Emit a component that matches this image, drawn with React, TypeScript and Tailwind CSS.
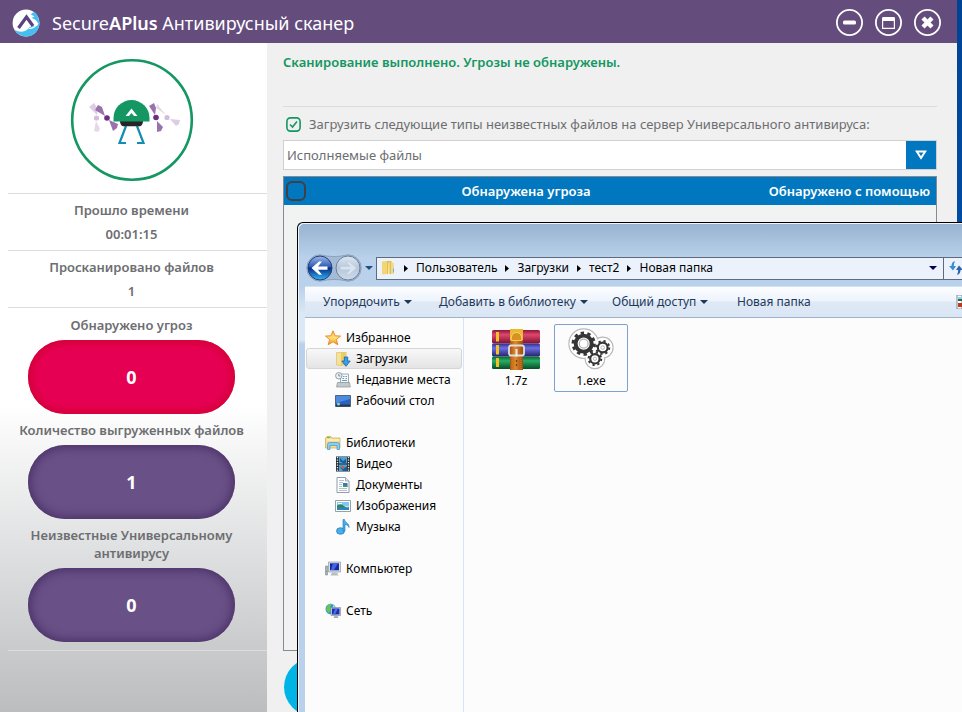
import React, { useState } from 'react';

interface StatProps {
  label: string;
  value: string;
}

const Stat: React.FC<StatProps> = ({ label, value }) => (
  <div className="border-t border-[#dcdcde] py-1 pr-3 text-center text-[13px] leading-6 font-semibold text-[#6d6e71]">
    <div>{label}</div>
    <div>{value}</div>
  </div>
);

interface CounterProps extends StatProps {
  danger?: boolean;
}

const Counter: React.FC<CounterProps> = ({ label, value, danger }) => (
  <div className="flex flex-col items-center pt-[7px] text-center text-[13px] leading-[18px] font-semibold text-[#6d6e71]">
    <div className="w-60">{label}</div>
    <div
      className={
        danger
          ? 'mt-1.5 flex h-[74px] w-[207px] items-center justify-center rounded-full bg-[#e60053] text-lg font-bold text-white shadow-[inset_0_0_9px_3px_#d10035]'
          : 'mt-1.5 flex h-[74px] w-[207px] items-center justify-center rounded-full bg-[#695087] text-lg font-bold text-white shadow-[inset_0_0_9px_3px_#4c3569]'
      }
    >
      {value}
    </div>
  </div>
);

const Logo = () => (
  <svg viewBox="0 0 28 28" className="size-7 shrink-0">
    <circle cx="14" cy="14" r="13.4" fill="#fff" />
    <path d="M19 5.500c1-2 3-2.500 5-1.500l2 4 1.400 5c.5 7-4 12.500-9.400 13.900C12 28.300 6 26.500 2.500 21c5 2.500 10 2.500 14-1.500l1-1.500 8-1.500c1-3.500-1.500-6-6-7.500l3-1.500z" fill="#45bff2" />
    <path d="M6.500 19 14.500 8l6.500 9" fill="none" stroke="#5b4380" strokeWidth="3.200" />
    <path d="M17 19.500c4 0 7-2 9-5.500" fill="none" stroke="#fff" strokeWidth="1.200" />
  </svg>
);

const Drone = () => (
  <svg viewBox="0 0 124 124" className="size-[124px]">
    <defs>
      <filter id="soft" x="-20%" y="-20%" width="140%" height="140%">
        <feGaussianBlur stdDeviation="0.7" />
      </filter>
    </defs>
    <circle cx="62" cy="62" r="59.800" fill="#fff" stroke="#149762" strokeWidth="2.600" />
    <g filter="url(#soft)">
      <path d="m27 57-8-8 5-4 4 6z" fill="#ddcde4" />
      <path d="m35 58-10-6 3-5 4 2z" fill="#9a72ab" />
      <path d="m39 62 9 4-1 4-4 3z" fill="#9a72ab" />
      <path d="m26 63 4 8-2 3-4-1z" fill="#e4d8ea" />
      <path d="m85 57-6-9 5-3 2 5z" fill="#9a72ab" />
      <path d="m96 57-10-7 1-4z" fill="#e4d8ea" />
      <path d="m87 63 6 6-2 4-4 1z" fill="#9a72ab" />
      <path d="m100 61 10 1-1 4-3 2z" fill="#ddcde4" />
    </g>
    <circle cx="26.500" cy="60" r="2.600" fill="#d3bcdc" />
    <circle cx="97" cy="59.500" r="2.600" fill="#d3bcdc" />
    <circle cx="37" cy="60" r="2.800" fill="#6a2f84" />
    <circle cx="86" cy="59.500" r="2.800" fill="#6a2f84" />
    <path d="M56 68 49.500 85H56M67 68 73.500 85H67" fill="none" stroke="#158bb5" strokeWidth="2.200" />
    <path d="M50 63h23c0 3-1.500 5.300-4 5.300H54c-2.500 0-4-2.300-4-5.300z" fill="#252628" />
    <path d="M43.500 63.500V60a18 18 0 0 1 36 0v3.500z" fill="#149762" />
    <path d="m55.500 58 6-7.500 6 7.500h-3.500l-2.500-3-2.500 3z" fill="#fff" />
  </svg>
);

const WindowButtons = () => (
  <div className="flex gap-3">
    <button aria-label="Свернуть">
      <svg viewBox="0 0 27 27" className="size-[27px]">
        <circle cx="13.500" cy="13.500" r="12.600" fill="none" stroke="#fff" strokeWidth="1.800" />
        <rect x="7" y="11.500" width="13" height="4" rx="1.500" fill="#fff" />
      </svg>
    </button>
    <button aria-label="Развернуть">
      <svg viewBox="0 0 27 27" className="size-[27px]">
        <circle cx="13.500" cy="13.500" r="12.600" fill="none" stroke="#fff" strokeWidth="1.800" />
        <path d="M7 9.500C7 8.500 7.500 8 8.500 8h10c1 0 1.500.5 1.500 1.500V20H7zm1.200 2.500v6.800h10.600V12z" fill="#fff" fillRule="evenodd" />
      </svg>
    </button>
    <button aria-label="Закрыть">
      <svg viewBox="0 0 27 27" className="size-[27px]">
        <circle cx="13.500" cy="13.500" r="12.600" fill="none" stroke="#fff" strokeWidth="1.800" />
        <path d="m9 9 9 9m0-9-9 9" stroke="#fff" strokeWidth="4.400" />
      </svg>
    </button>
  </div>
);

/* Explorer icons */

const FolderIcon = () => (
  <svg viewBox="0 0 16 16" className="size-4 shrink-0">
    <path d="M2 1.500 7 1v13l-5 .5z" fill="#f0d675" />
    <path d="M7 1h4.500v13H7z" fill="#e4bd4c" />
    <path d="m8.500 3 1-1.500v13L8 15z" fill="#fbf0b5" />
    <path d="M11.500 3 14 2.500v11l-2.500 1z" fill="#f3dc83" />
    <path d="M13.500 8.500v4" stroke="#6fb4d8" />
  </svg>
);

const StarIcon = () => (
  <svg viewBox="0 0 16 16" className="size-4 shrink-0">
    <defs>
      <linearGradient id="star" x1="0" y1="0" x2="0" y2="1">
        <stop offset="0" stopColor="#ffb347" />
        <stop offset=".5" stopColor="#ffe277" />
        <stop offset="1" stopColor="#f7901e" />
      </linearGradient>
    </defs>
    <path d="m8 .8 2.100 5 5.400.3-4.200 3.400 1.500 5.200L8 11.800l-4.800 2.900 1.500-5.200L.5 6.100l5.400-.3z" fill="url(#star)" stroke="#e58425" strokeWidth=".9" />
  </svg>
);

const DownloadsIcon = () => (
  <svg viewBox="0 0 16 16" className="size-4 shrink-0">
    <path d="M1.500 1.500h5v13l-5-.5z" fill="#f5e19a" stroke="#dcb95a" strokeWidth=".6" />
    <path d="M6 1h5.500v13.500H6z" fill="#eccb67" />
    <path d="M9.300 6h3.400v4h2.500L11 15.300 6.800 10h2.500z" fill="#35a0ea" stroke="#1762ad" strokeWidth=".8" />
  </svg>
);

const RecentIcon = () => (
  <svg viewBox="0 0 16 16" className="size-4 shrink-0">
    <path d="M5.500 2h8v9h-8z" fill="#f6f8fa" stroke="#8c979f" strokeWidth=".8" />
    <path d="M8 4.500h1.500m1 0H12M7.500 6.500H9m1.500 0H12M7 8.500h5" stroke="#63a1c9" />
    <path d="M2.500 10.500h12l.8 4.500H1.500z" fill="#c3c8cb" stroke="#8a9297" strokeWidth=".7" />
    <circle cx="3.800" cy="3.800" r="3.200" fill="#eef3f6" stroke="#87939b" strokeWidth=".9" />
    <path d="M3.800 2v2h1.500" fill="none" stroke="#4b6374" strokeWidth=".7" />
  </svg>
);

const DesktopIcon = () => (
  <svg viewBox="0 0 16 16" className="size-4 shrink-0">
    <path d="M.5 2.500h15v11H.5z" fill="#2a62c4" stroke="#526580" />
    <path d="M1 3h14v3L1 10z" fill="#4d8bdf" />
    <path d="M1 11.500h14V13.500H1z" fill="#27384e" />
    <circle cx="3.500" cy="11" r="1.600" fill="#6ad3e4" />
    <path d="M3 10.500h1v1H3z" fill="#f8c542" />
  </svg>
);

const LibrariesIcon = () => (
  <svg viewBox="0 0 16 16" className="size-4 shrink-0">
    <path d="M.5 3 2 1.500h4L7 3h8v10H.5z" fill="#f3dd94" stroke="#cfa94d" strokeWidth=".7" />
    <path d="M2 2.500h3" stroke="#67b567" />
    <path d="M1.500 5h13" stroke="#fff8d8" />
    <path d="M2.500 14.500v-5q0-2 2-2h8q2 0 2 2v5H12v-4H5v4z" fill="#8bcdf0" stroke="#4596c8" strokeWidth=".7" />
  </svg>
);

const VideoIcon = () => (
  <svg viewBox="0 0 16 16" className="size-4 shrink-0">
    <path d="M1 .5h14v15H1z" fill="#23292d" />
    <path d="M4 1h8v6.500H4zM4 8.500h8V15H4z" fill="#4ca3db" />
    <path d="m5 2 3 3 3-2v4H8L5 5.500zM4 10l4 3 4-3v5H8z" fill="#1e5d97" />
    <path d="m6 9 4 2-3 2z" fill="#c85a35" />
    <path d="M2.500 1v14M13.500 1v14" stroke="#e7eff2" strokeWidth="1.400" strokeDasharray="1.300 1.200" />
  </svg>
);

const DocumentIcon = () => (
  <svg viewBox="0 0 16 16" className="size-4 shrink-0">
    <path d="M2 .5h8.500L14 4v11.500H2z" fill="#fff" stroke="#84929e" strokeWidth=".9" />
    <path d="M10.500.5V4H14" fill="#dfe6eb" stroke="#84929e" strokeWidth=".7" />
    <path d="M4 3.500h5M4 5.500h4M4 7.500h3M4 9.500h3M4 11.500h8M4 13.500h8" stroke="#9db4c5" strokeWidth=".8" />
    <path d="M8 6h4.500v4H8z" fill="#3578b5" />
    <path d="M8 8.500h4.500V10H8z" fill="#4c9a59" />
  </svg>
);

const PictureIcon = () => (
  <svg viewBox="0 0 16 16" className="size-4 shrink-0">
    <path d="M.5 2.500h15v11H.5z" fill="#fff" stroke="#8a959d" strokeWidth=".9" />
    <path d="M2 4h12v4.500H2z" fill="#81c9ef" />
    <path d="M2 7.500q4-2 7 .5t5 1V10H2z" fill="#35845d" />
    <path d="M2 9.500h12V12H2z" fill="#2c86bb" />
    <path d="M3 5.500h4" stroke="#fff" />
  </svg>
);

const MusicIcon = () => (
  <svg viewBox="0 0 16 16" className="size-4 shrink-0">
    <ellipse cx="5.500" cy="12" rx="4" ry="3.300" fill="#4aaee8" stroke="#1d77b8" strokeWidth=".7" />
    <path d="M8 12V.5h1.500c.5 3.500 5 3.500 4.500 8-.9-2.300-2.500-3-4-3V12z" fill="#4aaee8" stroke="#1d77b8" strokeWidth=".6" />
  </svg>
);

const ComputerIcon = () => (
  <svg viewBox="0 0 16 16" className="size-4 shrink-0">
    <path d="M.5 5h2v9h-2z" fill="#aab2b9" stroke="#6e777e" strokeWidth=".5" />
    <path d="M1 10h1v1H1z" fill="#45b54f" />
    <path d="M3.500 1h12v10h-12z" fill="#d8dde2" stroke="#909ba5" strokeWidth=".7" />
    <path d="M5 2.300h9v7H5z" fill="#1729a5" />
    <path d="M8 2.300h5L9 9H6z" fill="#4166dd" />
    <path d="M7 11.500h5l1.500 3H5.500z" fill="#b7bec4" />
  </svg>
);

const NetworkIcon = () => (
  <svg viewBox="0 0 16 16" className="size-4 shrink-0">
    <circle cx="5.700" cy="6" r="5.200" fill="#2d9bd8" />
    <path d="M2 3q3-3 5-2L5 4l2 2-3 4-3-3z" fill="#6dc256" />
    <path d="m8 2 2 2-2 2z" fill="#b9e6f7" />
    <path d="M6 4.500h9.500v8H6z" fill="#d1d8df" stroke="#75828d" strokeWidth=".6" />
    <path d="M7 5.500h7.500v6H7z" fill="#1b2fb0" />
    <path d="M10 5.500h3l-3 6H8z" fill="#4a6ee0" />
    <path d="M9.500 12.500h3l1 2.500h-5z" fill="#a7b0b8" />
  </svg>
);

const ArchiveIcon = () => (
  <svg viewBox="0 0 48 42" className="h-[42px] w-12">
    <defs>
      <linearGradient id="red" x1="0" y1="0" x2="0" y2="1">
        <stop offset="0" stopColor="#8c1738" />
        <stop offset=".35" stopColor="#e0476d" />
        <stop offset="1" stopColor="#7d1230" />
      </linearGradient>
      <linearGradient id="blue" x1="0" y1="0" x2="0" y2="1">
        <stop offset="0" stopColor="#2e2d86" />
        <stop offset=".35" stopColor="#6d6ee2" />
        <stop offset="1" stopColor="#24236b" />
      </linearGradient>
      <linearGradient id="green" x1="0" y1="0" x2="0" y2="1">
        <stop offset="0" stopColor="#0b6137" />
        <stop offset=".35" stopColor="#27ae62" />
        <stop offset="1" stopColor="#084a29" />
      </linearGradient>
      <linearGradient id="belt" x1="0" y1="0" x2="1" y2="0">
        <stop offset="0" stopColor="#a95410" />
        <stop offset=".4" stopColor="#e0892c" />
        <stop offset="1" stopColor="#9d4c0c" />
      </linearGradient>
    </defs>
    <rect y="1" width="48" height="13.500" rx="1.500" fill="url(#red)" />
    <rect y="14.500" width="48" height="13" rx="1.500" fill="url(#blue)" />
    <rect y="27.500" width="48" height="12.500" rx="1.500" fill="url(#green)" />
    <path d="M4 3h3v9.500H4zM4 16h3v9.500H4zM4 29h3v9H4z" fill="#f0c228" />
    <path d="M18 0h13v41H18z" fill="url(#belt)" />
    <path d="M18 0h13v11H18z" fill="#e9b932" />
    <path d="M19 11.500q0-8 5.500-8t5.500 8z" fill="#d99220" stroke="#fbe07b" strokeWidth=".8" />
    <path d="M20 29v11M29 29v11" stroke="#e9a355" strokeWidth=".6" strokeDasharray="1 1" />
    <rect x="17" y="16.500" width="15" height="10" rx="2" fill="none" stroke="#dedfe2" strokeWidth="1.800" />
    <path d="M24.500 20v7.500" stroke="#eceef1" strokeWidth="2" />
    <circle cx="24.500" cy="32" r=".8" fill="#4c2507" />
    <circle cx="24.500" cy="36" r=".8" fill="#4c2507" />
  </svg>
);

const GearsIcon = () => (
  <svg viewBox="0 0 48 44" className="h-11 w-12">
    <g fill="#fff" stroke="#b9b9b9" strokeWidth="1.400">
      <circle cx="36" cy="20" r="10.500" />
      <circle cx="28" cy="31.500" r="10" />
      <circle cx="16.500" cy="16" r="15" />
    </g>
    <g fill="#fff">
      <circle cx="36" cy="20" r="9.900" />
      <circle cx="28" cy="31.500" r="9.400" />
      <circle cx="16.500" cy="16" r="14.400" />
    </g>
    <g fill="none" stroke="#353535">
      <circle cx="16.500" cy="16" r="8.200" strokeWidth="4" />
      <circle cx="16.500" cy="16" r="11" strokeWidth="2.800" strokeDasharray="3.500 3.412" />
      <circle cx="36" cy="20" r="5" strokeWidth="2.200" />
      <circle cx="36" cy="20" r="6.700" strokeWidth="2" strokeDasharray="2.300 2.962" />
      <circle cx="28" cy="31.500" r="4.800" strokeWidth="2.200" />
      <circle cx="28" cy="31.500" r="6.500" strokeWidth="2" strokeDasharray="2.300 2.805" />
    </g>
    <g fill="#fff" stroke="#b2b2b2">
      <circle cx="16.500" cy="16" r="4.500" strokeWidth="1.300" />
      <circle cx="36" cy="20" r="1.800" />
      <circle cx="28" cy="31.500" r="1.700" />
    </g>
  </svg>
);

const NavButtons = () => (
  <svg viewBox="0 0 56 28" className="h-7 w-14 shrink-0">
    <defs>
      <linearGradient id="back" x1="0" y1="0" x2="0" y2="1">
        <stop offset="0" stopColor="#9db9e6" />
        <stop offset=".45" stopColor="#2d5bb8" />
        <stop offset=".5" stopColor="#062a86" />
        <stop offset="1" stopColor="#31b7f5" />
      </linearGradient>
      <linearGradient id="fwd" x1="0" y1="0" x2="0" y2="1">
        <stop offset="0" stopColor="#dce7f3" />
        <stop offset=".5" stopColor="#b7c8dc" />
        <stop offset="1" stopColor="#cddbea" />
      </linearGradient>
    </defs>
    <path d="M14 .8q14 3.500 28 0a13 13 0 0 1 0 26.400q-14-3.500-28 0a13 13 0 0 1 0-26.400z" fill="#a5bbd5" stroke="#8ba2be" strokeWidth="1" />
    <circle cx="14" cy="14" r="12" fill="url(#back)" stroke="#243f79" />
    <path d="M5.500 14 13 7.500h3L12 12.500h9.500v3.200H12l4 5h-3z" fill="#fff" />
    <circle cx="42" cy="14" r="12" fill="url(#fwd)" stroke="#6e7f95" />
    <path d="M50.500 14 43 7.500h-3l4 5h-9.500v3.200H44l-4 5h3z" fill="#d8e4f0" stroke="#bccbdc" strokeWidth=".6" />
  </svg>
);

const RefreshIcon = () => (
  <svg viewBox="0 0 16 16" className="size-4 shrink-0">
    <path d="M7 1C4.500 1.500 3.500 3.500 3.500 6H1l4 4.500L8 6H5.800c0-1.800.4-3.500 1.200-5z" fill="#3b8bd0" />
    <path d="M9 15c2.500-.5 3.500-2.500 3.500-5H15l-4-4.500L8 10h2.200c0 1.800-.4 3.500-1.200 5z" fill="#2c62ab" />
  </svg>
);

const DownArrow = () => (
  <svg viewBox="0 0 8 4" className="h-1 w-2 shrink-0" fill="currentColor">
    <path d="M0 0h8L4 4z" />
  </svg>
);

const crumbs = ['Пользователь', 'Загрузки', 'тест2', 'Новая папка'];

const navGroups = [
  {
    title: 'Избранное',
    icon: <StarIcon />,
    items: [
      { name: 'Загрузки', icon: <DownloadsIcon />, active: true },
      { name: 'Недавние места', icon: <RecentIcon /> },
      { name: 'Рабочий стол', icon: <DesktopIcon /> },
    ],
  },
  {
    title: 'Библиотеки',
    icon: <LibrariesIcon />,
    items: [
      { name: 'Видео', icon: <VideoIcon /> },
      { name: 'Документы', icon: <DocumentIcon /> },
      { name: 'Изображения', icon: <PictureIcon /> },
      { name: 'Музыка', icon: <MusicIcon /> },
    ],
  },
  { title: 'Компьютер', icon: <ComputerIcon />, items: [] },
  { title: 'Сеть', icon: <NetworkIcon />, items: [] },
];

const Explorer = () => (
  <div className="absolute top-[222px] right-0 bottom-0 left-[297px] flex flex-col overflow-hidden rounded-tl-md border-t border-l border-black bg-[#b9d1ea] text-[12px] text-black">
    <div className="flex min-h-0 flex-1 flex-col rounded-tl-md border-t border-l border-[#eef5fc] bg-[linear-gradient(#98b3d0_0px,#b9d1ea_34px,#b9d1ea_62px,#dbe8f5_90px,#dbe8f5_116px,#b9d1ea_120px)] pl-1.5">
      {/* Address bar */}
      <div className="flex items-center pt-[30px] pb-1 pl-px">
        <NavButtons />
        <button aria-label="Последние страницы" className="ml-[3px] text-[#1d4f86]">
          <DownArrow />
        </button>
        <div className="ml-[3px] flex h-[23px] min-w-0 flex-1 items-center border border-r-0 border-[#5f6b7d] bg-[#ebf2fb] pl-[3px]">
          <FolderIcon />
          {crumbs.map((crumb) => (
            <button key={crumb} className="flex items-center whitespace-nowrap">
              <svg viewBox="0 0 4 7" className="mx-2 h-[7px] w-1">
                <path d="M0 0v7l4-3.500z" />
              </svg>
              {crumb}
            </button>
          ))}
          <button aria-label="Предыдущие расположения" className="mr-1.5 ml-auto text-[#00004d]">
            <DownArrow />
          </button>
        </div>
        <button
          aria-label="Обновить"
          className="flex h-[23px] w-[19px] items-center overflow-hidden border-y border-l border-[#5f6b7d] bg-[#ebf2fb] pl-1"
        >
          <RefreshIcon />
        </button>
      </div>

      {/* Command bar */}
      <div className="flex h-8 shrink-0 items-center border-t border-b border-t-[#d3e2f2] border-b-[#a0b2cc] bg-[linear-gradient(#fcfdff,#eef4fc_45%,#dfe9f6_50%,#dbe6f4)] pl-[18px] whitespace-nowrap text-[#1e395b]">
        <button className="flex w-[116px] items-center gap-1">
          Упорядочить <DownArrow />
        </button>
        <button className="flex w-[173px] items-center gap-1">
          Добавить в библиотеку <DownArrow />
        </button>
        <button className="flex w-[125px] items-center gap-1">
          Общий доступ <DownArrow />
        </button>
        <button>Новая папка</button>
        <button aria-label="Вид" className="ml-auto w-1.5 overflow-hidden">
          <svg viewBox="0 0 6 14" className="h-3.5 w-1.5">
            <path d="M1 0h5v14H1z" fill="#fff" stroke="#7d8ca0" />
            <path d="M2 2h4v2H2z" fill="#8ad0ef" />
            <path d="M2 4h4v2H2z" fill="#2b6b45" />
            <path d="M2 8h4v4H2z" fill="#c0391d" />
          </svg>
        </button>
      </div>

      <div className="flex min-h-0 flex-1 bg-[#fcfcfc]">
        <nav className="flex w-[159px] shrink-0 flex-col gap-[21px] border-r border-[#d6e5f5] pt-[9px]">
          {navGroups.map((group) => (
            <div key={group.title}>
              <button className="flex h-[21px] items-center gap-[5px] pl-5">
                {group.icon}
                {group.title}
              </button>
              {group.items.map((item) => (
                <button
                  key={item.name}
                  className={
                    item.active
                      ? 'ml-px flex h-[21px] w-[156px] items-center gap-[5px] rounded-[3px] border border-[#d5d5d5] bg-linear-to-b from-[#f8f8f8] to-[#e4e4e4] pl-7'
                      : 'flex h-[21px] items-center gap-[5px] pl-[30px]'
                  }
                >
                  {item.icon}
                  {item.name}
                </button>
              ))}
            </div>
          ))}
        </nav>
        <div className="flex items-start gap-px pt-1.5 pl-[15px]">
          <button className="flex h-[68px] w-[74px] flex-col items-center pt-[5px]">
            <ArchiveIcon />
            <span className="leading-5">1.7z</span>
          </button>
          <button className="flex h-[68px] w-[74px] flex-col items-center rounded-xs border border-[#7da2ce] pt-[3px]">
            <GearsIcon />
            <span className="leading-5">1.exe</span>
          </button>
        </div>
      </div>
    </div>
  </div>
);

const App: React.FC = () => {
  const [upload, setUpload] = useState<boolean>(true);

  return (
    <div className="relative flex h-screen overflow-hidden bg-linear-to-b from-[#004394] to-[#0060c4] pr-[5px] font-['Noto_Sans','Open_Sans',sans-serif]">
      <div className="flex min-w-0 flex-1 flex-col bg-[#f0f0f0]">
        <header className="flex h-[43px] shrink-0 items-center bg-[#644c7d] pt-0.5 pr-4 pl-3 text-white">
          <Logo />
          <h1 className="ml-3 flex-1 text-lg">
            Secure<b className="font-semibold">APlus</b> Антивирусный сканер
          </h1>
          <WindowButtons />
        </header>

        <div className="flex min-h-0 flex-1">
          <aside className="w-[267px] shrink-0 bg-[linear-gradient(#fff_54%,#dcddde_78%,#bcbdbf)] pl-2">
            <div className="flex h-[150px] items-center justify-center pt-1 pr-3">
              <Drone />
            </div>
            <Stat label="Прошло времени" value="00:01:15" />
            <Stat label="Просканировано файлов" value="1" />
            <div className="border-y border-[#dcdcde] pt-px pb-2">
              <div className="pr-3">
                <Counter label="Обнаружено угроз" value="0" danger />
                <Counter label="Количество выгруженных файлов" value="1" />
                <Counter label="Неизвестные Универсальному антивирусу" value="0" />
              </div>
            </div>
          </aside>

          <main className="flex min-w-0 flex-1 flex-col pr-5 pl-4">
            <p className="h-16 shrink-0 border-b border-[#dcdcde] pt-[9px] text-[13px] leading-5 font-semibold text-[#149762]">
              Сканирование выполнено. Угрозы не обнаружены.
            </p>
            <label className="flex h-[33px] shrink-0 items-center gap-2 pt-0.5 pl-[3px] text-[13px] whitespace-nowrap text-[#6d6e71]">
              <input
                type="checkbox"
                checked={upload}
                onChange={(e) => setUpload(e.target.checked)}
                className="peer sr-only"
              />
              <svg viewBox="0 0 15 15" className="size-[15px] shrink-0 text-transparent peer-checked:text-[#149762]">
                <rect x=".9" y=".9" width="13.200" height="13.200" rx="3.500" fill="none" stroke="#149762" strokeWidth="1.600" />
                <path d="m4 7.500 2.500 2.500 4.500-5.500" fill="none" stroke="currentColor" strokeWidth="1.600" />
              </svg>
              Загрузить следующие типы неизвестных файлов на сервер Универсального антивируса:
            </label>
            <div className="relative shrink-0">
              <select
                aria-label="Типы файлов"
                className="block h-[30px] w-full appearance-none border border-[#d0d0d2] bg-white pt-px pl-[3px] text-[13px] text-[#6d6e71]"
              >
                <option>Исполняемые файлы</option>
              </select>
              <span className="pointer-events-none absolute inset-y-px right-px flex w-[30px] items-center justify-center bg-[#0077be]">
                <svg viewBox="0 0 12 10" className="h-2.5 w-3">
                  <path d="M1.800 1.500h8.400L6 8z" fill="none" stroke="#fff" strokeWidth="2" />
                </svg>
              </span>
            </div>
            <div className="mt-1.5 h-[475px] shrink-0 border border-[#868a92] bg-[#f1f3f2]">
              <table className="w-full table-fixed bg-[#0077be] text-[13px] text-white">
                <thead>
                  <tr className="h-7">
                    <th className="w-7 pl-0.5 text-left">
                      <input
                        type="checkbox"
                        aria-label="Выбрать все"
                        className="block size-5 appearance-none rounded-md border-2 border-[#3f4146] checked:bg-[#3f4146]"
                      />
                    </th>
                    <th className="pt-0.5 font-semibold">Обнаружена угроза</th>
                    <th className="w-[196px] pt-0.5 pr-1.5 text-right font-semibold whitespace-nowrap">
                      Обнаружено с помощью
                    </th>
                  </tr>
                </thead>
              </table>
            </div>
            <button aria-label="Готово" className="mt-[7px] ml-px h-[58px] w-[207px] shrink-0 rounded-full bg-[#00b5e6]" />
          </main>
        </div>
      </div>

      <Explorer />
    </div>
  );
};

export default App;
